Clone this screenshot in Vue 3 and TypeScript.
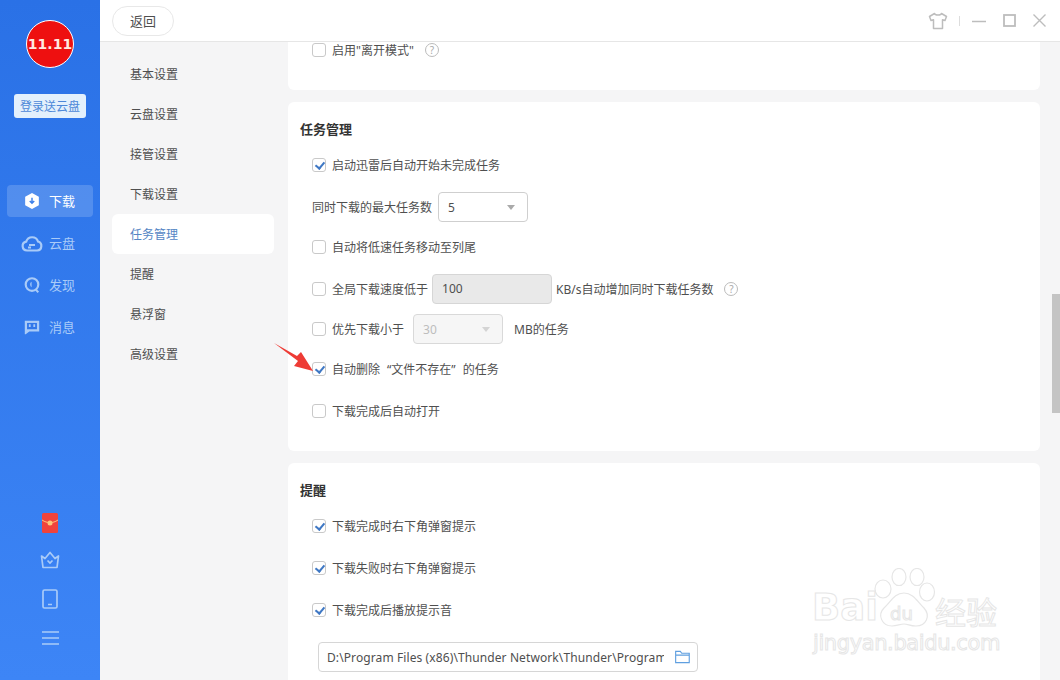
<script setup lang="ts">
const settingsNav: string[] = ['基本设置', '云盘设置', '接管设置', '下载设置', '任务管理', '提醒', '悬浮窗', '高级设置']
const activeNav = '任务管理'
const remindRows: string[] = ['下载完成时右下角弹窗提示', '下载失败时右下角弹窗提示', '下载完成后播放提示音']
</script>

<template>
  <div class="app">
    <aside class="side">
      <div class="avatar"><span>11.11</span></div>
      <div class="login">登录送云盘</div>
      <nav class="side-nav">
        <div class="side-item on">
          <svg class="side-icon" viewBox="0 0 20 20"><path d="M10 1l7.600 4.200v9.400L10 19l-7.600-4.400V5.200z" fill="#fff"/><path d="M10 6.500v5.500M7.500 10l2.500 2.500 2.500-2.500" fill="none" stroke="#3b7fea" stroke-width="1.600"/></svg>
          <span>下载</span>
        </div>
        <div class="side-item">
          <svg class="side-icon wide" viewBox="0 0 22 18"><path d="M6 16.500a4.500 4.500 0 0 1-.8-8.900A6.200 6.200 0 0 1 17 7.500a4.600 4.600 0 0 1-.8 9z" fill="none" stroke="#a9cbf8" stroke-width="2.200"/><path d="M8 11h6M7 13.500h3" stroke="#a9cbf8" stroke-width="1.800"/></svg>
          <span>云盘</span>
        </div>
        <div class="side-item">
          <svg class="side-icon" viewBox="0 0 20 20"><circle cx="10" cy="9.500" r="7" fill="none" stroke="#a9cbf8" stroke-width="2.400"/><path d="M14 15l3 3" stroke="#a9cbf8" stroke-width="2.200"/><path d="M9.500 6.500c-2 .8-2 5 0 6z" fill="#a9cbf8"/></svg>
          <span>发现</span>
        </div>
        <div class="side-item">
          <svg class="side-icon" viewBox="0 0 20 20"><path d="M2 3h16v12H7l-4 3H2z" fill="#a9cbf8"/><rect x="4.500" y="5.500" width="11" height="7" fill="#3278ea"/><path d="M7.500 7v3M12.500 7v3" stroke="#a9cbf8" stroke-width="2"/></svg>
          <span>消息</span>
        </div>
      </nav>
      <div class="side-tools">
        <svg class="packet" width="16" height="20" viewBox="0 0 16 20"><rect width="16" height="20" rx="1.500" fill="#f0433c"/><path d="M0 7c3 2 5 2.500 8 2.500S13 9 16 7" fill="none" stroke="#fbc77a" stroke-width="1"/><circle cx="8" cy="10" r="2.500" fill="#fbc77a"/></svg>
        <svg width="20" height="18" viewBox="0 0 20 18"><path d="M1.500 5l3.500 2.500L10 1.500l5 6L18.500 5l-1.500 11.500H3z" fill="none" stroke="#a9cbf8" stroke-width="1.700" stroke-linejoin="round"/><path d="M7.500 9.500L10 12l2.500-2.500" fill="none" stroke="#a9cbf8" stroke-width="1.700"/></svg>
        <svg width="16" height="20" viewBox="0 0 16 20"><rect x="1" y="1" width="14" height="18" rx="1.500" fill="none" stroke="#a9cbf8" stroke-width="1.700"/><path d="M6 15.500h4" stroke="#a9cbf8" stroke-width="1.500"/></svg>
        <svg class="burger" width="17" height="14" viewBox="0 0 17 14"><path d="M0 1h17M0 7h17M0 13h17" stroke="#a9cbf8" stroke-width="1.700"/></svg>
      </div>
    </aside>

    <div class="main">
      <header class="top">
        <button class="back">返回</button>
        <div class="win">
          <svg class="shirt" width="20" height="18" viewBox="0 0 20 18"><path d="M6.500 1.500L1.500 4.500l1.500 4 2.500-.8V16.500h9V7.700l2.500.8 1.500-4-5-3c-.5 2-6.500 2-7 0z" fill="none" stroke="#bdbdbd" stroke-width="1.500" stroke-linejoin="round"/></svg>
          <i class="sep"></i>
          <svg width="14" height="14" viewBox="0 0 14 14"><path d="M0 7.500h14" stroke="#bdbdbd" stroke-width="1.500"/></svg>
          <svg width="13" height="13" viewBox="0 0 13 13"><rect x="1" y="1" width="11" height="11" fill="none" stroke="#bdbdbd" stroke-width="1.800"/></svg>
          <svg width="13" height="13" viewBox="0 0 13 13"><path d="M.5.500l12 12M12.500.500l-12 12" stroke="#bdbdbd" stroke-width="1.400"/></svg>
        </div>
      </header>

      <div class="body">
        <ul class="set-nav">
          <li v-for="item in settingsNav" :key="item" :class="{ active: item === activeNav }">{{ item }}</li>
        </ul>

        <div class="content">
          <section class="card first">
            <div class="row">
              <i class="cb"></i><span>启用"离开模式"</span>
              <i class="help">?</i>
            </div>
          </section>

          <section class="card">
            <h3>任务管理</h3>
            <div class="row">
              <i class="cb checked"></i><span>启动迅雷后自动开始未完成任务</span>
            </div>
            <div class="row wide">
              <span>同时下载的最大任务数</span>
              <div class="select"><span>5</span><b></b></div>
            </div>
            <div class="row">
              <i class="cb"></i><span>自动将低速任务移动至列尾</span>
            </div>
            <div class="row wide">
              <i class="cb"></i><span>全局下载速度低于</span>
              <div class="num">100</div>
              <span class="after">KB/s自动增加同时下载任务数</span>
              <i class="help">?</i>
            </div>
            <div class="row">
              <i class="cb"></i><span>优先下载小于</span>
              <div class="select off"><span>30</span><b></b></div>
              <span class="after-mb">MB的任务</span>
            </div>
            <div class="row">
              <i class="cb checked"></i><span>自动删除<span class="quoted">“文件不存在”</span>的任务</span>
            </div>
            <div class="row wide">
              <i class="cb"></i><span>下载完成后自动打开</span>
            </div>
          </section>

          <section class="card">
            <h3>提醒</h3>
            <div v-for="(text, i) in remindRows" :key="text" class="row" :class="{ wide: i > 0 }">
              <i class="cb checked"></i><span>{{ text }}</span>
            </div>
            <div class="path">
              <span>D:\Program Files (x86)\Thunder Network\Thunder\Program</span>
              <svg width="16" height="14" viewBox="0 0 16 14"><path d="M.7 1h5l1.500 2h8v10H.7zM.7 5h14.500" fill="none" stroke="#5f9fe0" stroke-width="1.200"/></svg>
            </div>
          </section>
        </div>
      </div>
    </div>

    <i class="scrollbar"></i>

    <svg class="arrow" width="44" height="36" viewBox="0 0 44 36">
      <path d="M0 0L23 13 27 9 39 28 20 23 24 18z" fill="#ee3b35"/>
    </svg>

    <div class="mark">
      <svg class="paw" width="66" height="72" viewBox="0 0 66 72">
        <g fill="#fff" stroke="#e6e6e6" stroke-width="1.200">
          <ellipse cx="11" cy="21" rx="8" ry="9"/>
          <ellipse cx="27" cy="9" rx="7" ry="8.500"/>
          <ellipse cx="45" cy="9" rx="7" ry="8.500"/>
          <ellipse cx="55" cy="24" rx="7.500" ry="9"/>
          <path d="M32 25c9 0 13 8 20 15 7 8 2 18-8 18-6 0-8-2-12-2s-7 2-12 2C10 58 5 47 12 40c7-6 10-15 20-15z"/>
        </g>
      </svg>
      <span class="m-bai">Bai</span>
      <span class="m-du">du</span>
      <span class="m-cn">经验</span>
      <span class="m-url">jingyan.baidu.com</span>
    </div>
  </div>
</template>

<style>
html, body { margin: 0; background: #fff; }
</style>

<style scoped>
.app {
  position: relative;
  display: flex;
  width: 1060px;
  height: 680px;
  overflow: hidden;
  font-family: "Noto Sans", "Noto Sans CJK SC", sans-serif;
  font-size: 12px;
  color: #4f4f4f;
  background: #f5f5f6;
}
.side {
  flex: 0 0 100px;
  display: flex;
  flex-direction: column;
  align-items: center;
  background: linear-gradient(180deg, #2a71e6, #3d85f6);
}
.avatar {
  box-sizing: border-box;
  width: 48px;
  height: 48px;
  margin-top: 20px;
  border: 1px solid #fff;
  border-radius: 50%;
  background: #ee1010;
  display: flex;
  align-items: center;
  justify-content: center;
  color: #ffe9e0;
  font-family: "DejaVu Sans", sans-serif;
  font-weight: 700;
  font-size: 14px;
  letter-spacing: 0;
}
.login {
  width: 72px;
  height: 24px;
  margin-top: 26px;
  border-radius: 3px;
  background: #e3f0fc;
  color: #4d88d8;
  text-align: center;
  line-height: 25px;
}
.side-nav {
  width: 86px;
  margin-top: 67px;
  display: flex;
  flex-direction: column;
  gap: 10px;
}
.side-item {
  height: 32px;
  border-radius: 4px;
  display: flex;
  align-items: center;
  padding-left: 16px;
  gap: 8px;
  font-size: 13px;
  color: #a9cbf8;
}
.side-item span { position: relative; top: -1px; }
.side-item.on {
  background: rgba(255, 255, 255, .17);
  color: #fff;
}
.side-icon { width: 18px; height: 18px; flex: none; }
.side-icon.wide { width: 22px; margin-left: -2px; margin-right: -2px; }
.side-tools {
  margin-top: auto;
  padding-bottom: 35px;
  display: flex;
  flex-direction: column;
  align-items: center;
  gap: 20px;
}
.packet { margin-bottom: -2px; }
.burger { margin-top: 2px; }
.main {
  flex: 1;
  min-width: 0;
  display: flex;
  flex-direction: column;
}
.top {
  position: relative;
  z-index: 1;
  box-sizing: border-box;
  height: 42px;
  flex: none;
  display: flex;
  align-items: center;
  justify-content: space-between;
  padding: 0 14px 0 12px;
  background: #fff;
  border-bottom: 1px solid #e6e6e6;
}
.back {
  width: 62px;
  height: 30px;
  border: 1px solid #e8e8e8;
  border-radius: 15px;
  background: #fff;
  padding: 0;
  font: inherit;
  font-size: 13px;
  color: #4f4f4f;
}
.win {
  display: flex;
  align-items: center;
  gap: 17px;
}
.shirt { margin-right: 1px; }
.sep { width: 1px; height: 10px; background: #ddd; margin: 0 -5px 0 -7px; }
.body { flex: 1; min-height: 0; display: flex; }
.set-nav {
  flex: 0 0 162px;
  list-style: none;
  margin: 0;
  padding: 12px 14px 0 12px;
}
.set-nav li {
  height: 40px;
  line-height: 42px;
  padding-left: 18px;
  border-radius: 6px;
}
.set-nav li.active { background: #fff; color: #5485c4; }
.content {
  flex: 0 0 752px;
  overflow: hidden;
}
.card {
  box-sizing: border-box;
  background: #fff;
  border-radius: 6px;
  padding: 18px 12px 25px;
  margin-bottom: 12px;
}
.card.first { margin-top: -20px; padding-top: 13px; }
.card h3 {
  margin: 0 0 10px;
  height: 20px;
  line-height: 18px;
  font-size: 13px;
  font-weight: 700;
  color: #333;
}
.row {
  height: 30px;
  display: flex;
  align-items: center;
  margin: 10px 0 0 12px;
}
.card.first .row { margin-top: 0; }
.card h3 + .row { margin-top: 0; }
.row.wide { margin-top: 12px; }
.cb {
  box-sizing: border-box;
  position: relative;
  width: 14px;
  height: 14px;
  flex: none;
  margin-right: 6px;
  border: 1px solid #c9c9c9;
  border-radius: 3px;
  background: #fff;
}
.cb.checked::after {
  content: "";
  position: absolute;
  left: 3.500px;
  top: 1px;
  width: 4px;
  height: 7px;
  border: solid #3f78c4;
  border-width: 0 2px 2px 0;
  transform: rotate(40deg);
}
.quoted { margin: 0 7px; }
.help {
  box-sizing: border-box;
  width: 14px;
  height: 14px;
  margin-left: 11px;
  border: 1px solid #bbb;
  border-radius: 50%;
  color: #aaa;
  font-style: normal;
  font-size: 10px;
  line-height: 12px;
  text-align: center;
}
.select {
  box-sizing: border-box;
  width: 90px;
  height: 30px;
  margin-left: 6px;
  padding: 0 12px 0 9px;
  display: flex;
  align-items: center;
  justify-content: space-between;
  border: 1px solid #cfcfcf;
  border-radius: 4px;
  background: #fff;
}
.select b {
  width: 0;
  height: 0;
  border: 4px solid transparent;
  border-top: 5px solid #aaa;
  border-bottom: 0;
}
.select.off {
  margin-left: 9px;
  background: #f6f6f6;
  border-color: #d9d9d9;
  color: #bdbdbd;
}
.select.off b { border-top-color: #d4d4d4; }
.after-mb { margin-left: 11px; }
.num {
  box-sizing: border-box;
  width: 120px;
  height: 30px;
  margin-left: 4px;
  padding-left: 9px;
  line-height: 28px;
  background: #e9e9e9;
  border: 1px solid #d6d6d6;
  border-radius: 4px;
}
.after { margin-left: 4px; }
.path {
  box-sizing: border-box;
  width: 380px;
  height: 30px;
  margin: 17px 0 0 18px;
  padding: 0 7px 0 8px;
  display: flex;
  align-items: center;
  gap: 11px;
  border: 1px solid #d6d6d6;
  border-radius: 4px;
}
.path span {
  width: 337px;
  flex: none;
  overflow: hidden;
  white-space: nowrap;
  letter-spacing: .1px;
}
.scrollbar {
  position: absolute;
  left: 1052px;
  top: 294px;
  width: 8px;
  height: 119px;
  background: #c4c4c4;
}
.arrow {
  position: absolute;
  left: 274px;
  top: 343px;
}
.mark {
  position: absolute;
  left: 800px;
  top: 560px;
  width: 210px;
  height: 100px;
}
.paw { position: absolute; left: 72px; top: 8px; }
.mark span {
  position: absolute;
  color: #fff;
  -webkit-text-stroke: 1px #e6e6e6;
  font-family: "DejaVu Sans", sans-serif;
  white-space: nowrap;
}
.m-bai { left: 12px; top: 27px; font-size: 37px; font-weight: 700; line-height: 42px; }
.m-du { left: 90px; top: 43px; font-size: 18px; line-height: 22px; }
.m-cn { left: 135px; top: 33px; font-size: 31px; line-height: 36px; font-family: "Noto Sans CJK SC", sans-serif !important; }
.m-url { left: 13px; top: 70px; font-size: 21px; line-height: 26px; letter-spacing: -.4px; }
</style>
